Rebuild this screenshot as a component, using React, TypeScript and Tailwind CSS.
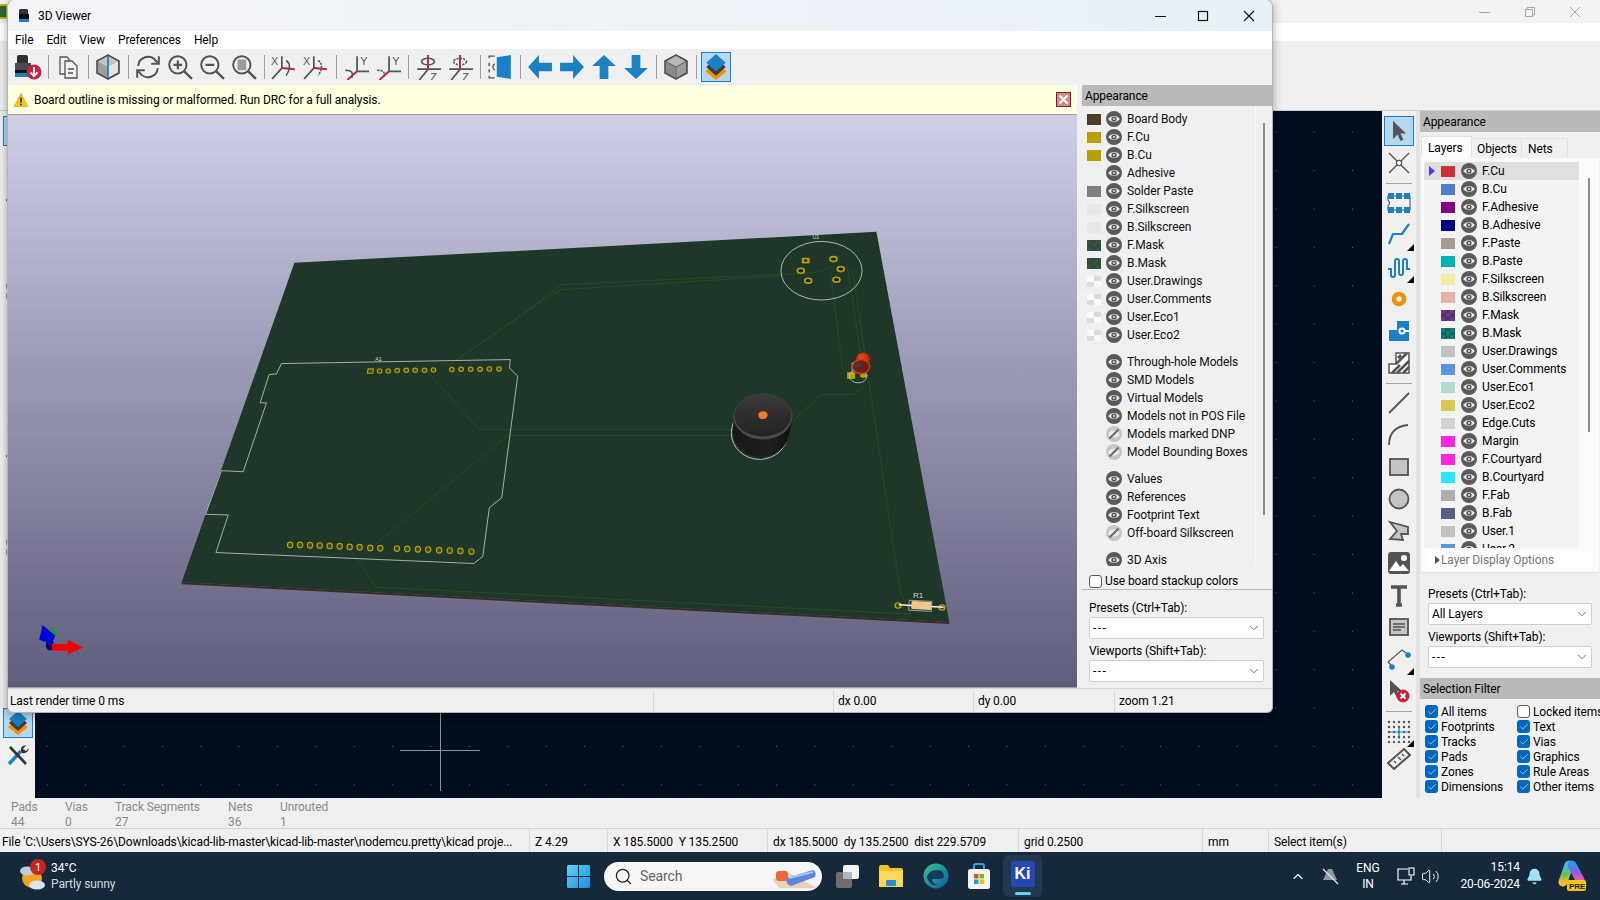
import React from "react";
import { Check, ChevronDown, ChevronUp, Search, Volume2, Bell } from "lucide-react";

const BLUE = "#1a81c4";
const GRAY = "#545454";

const Ic = ({ children, size = 24 }: { children: React.ReactNode; size?: number }) => (
  <svg width={size} height={size} viewBox="0 0 24 24" fill="none">
    {children}
  </svg>
);

const Eye = ({ off }: { off?: boolean }) =>
  off ? (
    <svg width="16" height="16" viewBox="0 0 16 16" className="shrink-0">
      <circle cx="8" cy="8" r="8" fill="#c6c6c6" />
      <ellipse cx="8" cy="8" rx="5.5" ry="3.6" fill="#ececec" />
      <path d="M3.5 12.5L12.5 3.5" stroke="#6a6a6a" strokeWidth="2" />
    </svg>
  ) : (
    <svg width="16" height="16" viewBox="0 0 16 16" className="shrink-0">
      <circle cx="8" cy="8" r="8" fill="#5a5a5a" />
      <path d="M2.2 8C5 4 11 4 13.8 8C11 12 5 12 2.2 8Z" fill="#e9e9e9" />
      <circle cx="8" cy="8" r="2.6" fill="#5a5a5a" />
      <circle cx="8" cy="8" r="1" fill="#e9e9e9" />
    </svg>
  );

/* ---------- 3D viewer toolbar icons ---------- */
const RenderIcon = () => (
  <svg width="28" height="26" viewBox="0 0 28 26">
    <path d="M3 3Q3 1 5 1H12Q14 1 14 3V9H3Z" fill="#303030" />
    <rect x="1" y="9" width="16" height="7" fill="#4a4a4a" />
    <rect x="1" y="16" width="16" height="3" fill="#111" />
    <rect x="1" y="19" width="16" height="4" fill={BLUE} />
    <circle cx="20" cy="18" r="7.5" fill="#c9203c" />
    <path d="M20 13V22M16.5 18.5L20 22L23.5 18.5" stroke="#fff" strokeWidth="2" fill="none" />
  </svg>
);
const CopyIcon = () => (
  <Ic>
    <path d="M4 2H11L13 4V19H4Z" stroke={GRAY} strokeWidth="1.3" fill="#f0f0f0" />
    <path d="M9 6H16L21 11V23H9Z" stroke={GRAY} strokeWidth="1.3" fill="#f0f0f0" />
    <path d="M12 14H18M12 18H17" stroke={GRAY} strokeWidth="1.3" />
  </Ic>
);
const CubeIcon = ({ blue }: { blue?: boolean }) => (
  <Ic size={26}>
    <path d="M12 1L22 6.5V17.5L12 23L2 17.5V6.5Z" fill={blue ? "#e4e4e4" : "#9a9a9a"} stroke={GRAY} strokeWidth="1.4" />
    <path d="M12 1L22 6.5L12 12L2 6.5Z" fill={blue ? "#c4c4c4" : "#b8b8b8"} />
    <path d="M2 6.5V17.5L12 23V12Z" fill={blue ? "#9c9c9c" : "#8a8a8a"} />
    {blue ? (
      <path d="M12 1V23" stroke={BLUE} strokeWidth="1.6" />
    ) : (
      <path d="M12 12V23M12 12L2 6.5M12 12L22 6.5" stroke="#6a6a6a" strokeWidth="1" />
    )}
    <path d="M12 1L22 6.5V17.5L12 23L2 17.5V6.5Z" fill="none" stroke={GRAY} strokeWidth="1.4" />
  </Ic>
);
const RefreshIcon = () => (
  <Ic size={26}>
    <path d="M3 11A9 9 0 0 1 19 6L21 8" stroke={GRAY} strokeWidth="1.8" />
    <path d="M22 2V9H15" stroke={GRAY} strokeWidth="1.8" />
    <path d="M21 13A9 9 0 0 1 5 18L3 16" stroke={GRAY} strokeWidth="1.8" />
    <path d="M2 22V15H9" stroke={GRAY} strokeWidth="1.8" />
  </Ic>
);
const ZoomIcon = ({ mode }: { mode: "in" | "out" | "fit" }) => (
  <Ic size={26}>
    <circle cx="10" cy="10" r="8" stroke={GRAY} strokeWidth="1.8" />
    <path d="M16 16L23 23" stroke={GRAY} strokeWidth="2.2" />
    {mode !== "fit" && <path d="M6 10H14" stroke={GRAY} strokeWidth="2" />}
    {mode === "in" && <path d="M10 6V14" stroke={GRAY} strokeWidth="2" />}
    {mode === "fit" && <rect x="6" y="5" width="8" height="10" rx="1" fill="#9a9a9a" />}
  </Ic>
);
const RotIcon = ({ axis, flip }: { axis: "X" | "Y" | "Z"; flip?: boolean }) => (
  <Ic size={26}>
    {axis === "X" && (
      <>
        <path d="M1 23L10 13V2" stroke={GRAY} strokeWidth="1.6" />
        <path d="M10 13L22 14" stroke="#c9203c" strokeWidth="1.8" />
        <path d="M14 6Q20 10 14 20" stroke={GRAY} strokeWidth="1.4" strokeDasharray={flip ? "2 1" : undefined} />
        <text x="0" y="10" fontSize="10" fill={GRAY} fontFamily="Liberation Sans">X</text>
      </>
    )}
    {axis === "Y" && (
      <>
        <path d="M13 2V16H24" stroke={GRAY} strokeWidth="1.6" />
        <path d="M13 16L4 24" stroke="#c9203c" strokeWidth="1.8" />
        <path d="M2 15Q11 15 8 22" stroke={GRAY} strokeWidth="1.4" strokeDasharray={flip ? "2 1" : undefined} />
        <text x="16" y="10" fontSize="10" fill={GRAY} fontFamily="Liberation Sans">Y</text>
      </>
    )}
    {axis === "Z" && (
      <>
        <path d="M2 14H24M12 14L4 24" stroke={GRAY} strokeWidth="1.6" />
        <path d="M12 1V14" stroke="#c9203c" strokeWidth="1.8" />
        <ellipse cx="12" cy="7" rx="6" ry="3" stroke={GRAY} strokeWidth="1.4" strokeDasharray={flip ? "2 1" : undefined} />
        <text x="14" y="25" fontSize="10" fill={GRAY} fontFamily="Liberation Sans">Z</text>
      </>
    )}
  </Ic>
);
const FlipIcon = () => (
  <Ic size={26}>
    <path d="M7 2H2V4M2 8V11M2 14V17M2 20V22H7" stroke={GRAY} strokeWidth="1.3" fill="none" />
    <path d="M9 3L22 1V23L9 21Z" fill={BLUE} />
    <path d="M7 9Q4 12 7 15" stroke={GRAY} strokeWidth="1.2" />
  </Ic>
);
const Arrow = ({ d }: { d: "l" | "r" | "u" | "d" }) => {
  const rot = { l: "rotate(180 12 12)", r: "", u: "rotate(-90 12 12)", d: "rotate(90 12 12)" }[d];
  return (
    <Ic size={26}>
      <path transform={rot} d="M1 8H13V1L23 12L13 23V16H1Z" fill={BLUE} />
    </Ic>
  );
};
const LayersIcon = () => (
  <Ic size={26}>
    <path d="M12 8L22 16L12 24L2 16Z" fill="#f29100" />
    <path d="M12 4L21 12L12 20L3 12Z" fill="#3d3d3d" />
    <path d="M12 0L21 8L12 16L3 8Z" fill={BLUE} />
  </Ic>
);

/* ---------- pcb editor drawing tools ---------- */
const tool = {
  select: <path d="M6 2V20L10.5 15.5L13.5 22L16.5 20.8L13.5 14.5H19Z" fill={GRAY} />,
  route: (
    <>
      <path d="M2 2L10 10M22 2L14 10M2 22L10 14M22 22L14 14" stroke={GRAY} strokeWidth="1.4" />
      <circle cx="12" cy="12" r="2.6" stroke={GRAY} strokeWidth="1.2" fill="#fff" />
    </>
  ),
  footprint: (
    <>
      <path d="M1 5H23V19H1V15Q4 12 1 9Z" stroke={GRAY} strokeWidth="1.1" />
      {[1, 9, 17].map((x) => (
        <React.Fragment key={x}>
          <rect x={x} y="2" width="6" height="6" fill={BLUE} />
          <rect x={x} y="16" width="6" height="6" fill={BLUE} />
        </React.Fragment>
      ))}
    </>
  ),
  track: <path d="M2 21L6 11H15L22 1" stroke={BLUE} strokeWidth="2.2" />,
  tune: <path d="M1 14H4V20Q4 22 6 22T8 20V6Q8 4 10 4T12 6V18Q12 20 14 20T16 18V6Q16 4 18 4T20 6V14H23" stroke={BLUE} strokeWidth="2" />,
  via: <circle cx="12" cy="12" r="5" stroke="#f29100" strokeWidth="4.6" />,
  zone: (
    <>
      <path d="M10 2H22V22H2V11H10Z" fill={BLUE} />
      <path d="M22 12H15" stroke="#fff" strokeWidth="2" />
      <circle cx="15" cy="12" r="2.6" fill={BLUE} stroke="#fff" strokeWidth="2" />
    </>
  ),
  hatch: (
    <>
      <path d="M2 22V13H9V2H22V22Z" fill="#fff" stroke={GRAY} strokeWidth="1.5" />
      <path d="M5 22L13 14M10 22L22 10M16 22L22 16M9 13L20 2M14 4L11 7" stroke={GRAY} strokeWidth="2.6" />
    </>
  ),
  line: <path d="M2 22L22 2" stroke={GRAY} strokeWidth="1.8" />,
  arc: <path d="M2 22Q2 4 21 2" stroke={GRAY} strokeWidth="1.8" />,
  rect: <rect x="3" y="4" width="18" height="16" fill="#c4c4c4" stroke={GRAY} strokeWidth="1.8" />,
  circle: <circle cx="12" cy="12" r="9.5" fill="#c4c4c4" stroke={GRAY} strokeWidth="1.8" />,
  poly: <path d="M3 3L21 8V15L14 15L16 21L3 20L10 12Z" fill="#c4c4c4" stroke={GRAY} strokeWidth="1.8" />,
  image: (
    <>
      <rect x="1" y="1" width="22" height="22" rx="3" fill={GRAY} />
      <circle cx="17" cy="7" r="3" fill="#fff" />
      <path d="M2 20L9 10L13 16L16 13L22 20Z" fill="#fff" />
    </>
  ),
  text: <path d="M4 4H20M12 4V22M9 22H15" stroke={GRAY} strokeWidth="3.6" />,
  textbox: (
    <>
      <rect x="3" y="4" width="18" height="16" fill="#c4c4c4" stroke={GRAY} strokeWidth="1.8" />
      <path d="M6 9H18M6 12H18M6 15H14" stroke={GRAY} strokeWidth="1.3" />
    </>
  ),
  dim: (
    <>
      <path d="M4 18L1 15L15 3L19 6" stroke={GRAY} strokeWidth="1.2" />
      <circle cx="5" cy="20" r="2.8" fill={BLUE} />
      <circle cx="21" cy="8" r="2.8" fill={BLUE} />
    </>
  ),
  del: (
    <>
      <path d="M3 1V17L7 13L10 19L13 18L10 12H15Z" fill={GRAY} />
      <circle cx="16" cy="17" r="6.5" fill="#c9203c" />
      <path d="M13.5 14.5L18.5 19.5M18.5 14.5L13.5 19.5" stroke="#fff" strokeWidth="1.8" />
    </>
  ),
  grid: (
    <>
      {[2, 7, 12, 17, 22].map((x) =>
        [3, 8, 13, 18, 23].map((y) => <circle key={`${x}-${y}`} cx={x} cy={y} r="1.2" fill={GRAY} />)
      )}
      <path d="M2 13H22M12 8V20" stroke={BLUE} strokeWidth="1.2" />
    </>
  ),
  ruler: (
    <>
      <path d="M1 17L17 3L23 9L7 23Z" fill="#eee" stroke={GRAY} strokeWidth="2" />
      <path d="M7 15L9 17M11 11L14 14M15 8L17 10" stroke={GRAY} strokeWidth="1.4" />
    </>
  ),
  layers: (
    <>
      <path d="M12 8L22 16L12 24L2 16Z" fill="#f29100" />
      <path d="M12 4L21 12L12 20L3 12Z" fill="#3d3d3d" />
      <path d="M12 0L21 8L12 16L3 8Z" fill={BLUE} />
    </>
  ),
  wrench: (
    <>
      <path d="M3 21L15 8" stroke={BLUE} strokeWidth="3.4" />
      <path d="M15 8Q14 3 20 2L17 6L20 8L23 5Q22 11 16 10" fill="#333" />
      <path d="M4 4L20 21" stroke="#333" strokeWidth="2.6" />
    </>
  ),
};

const ToolBtn = ({ icon, corner, active }: { icon: React.ReactNode; corner?: boolean; active?: boolean }) => (
  <div
    className={
      active
        ? "relative w-[30px] h-[30px] mx-auto my-px flex items-center justify-center bg-[#b6d7f2] border border-[#1a81c4]"
        : "relative w-[30px] h-[32px] mx-auto flex items-center justify-center"
    }
  >
    <Ic>{icon}</Ic>
    {corner && <div className="absolute right-0 bottom-0 w-0 h-0 border-l-[7px] border-l-transparent border-b-[7px] border-b-black" />}
  </div>
);
const VSep = () => <div className="h-2 flex items-center px-1"><div className="w-full h-px bg-[#a8a8a8]" /></div>;

/* ---------- lists ---------- */
const swatchDark = "bg-[repeating-conic-gradient(#2e4a38_0_25%,#37533f_0_50%)] bg-[size:9px_7px]";
const swatchChecker = "bg-[repeating-conic-gradient(#dcdcdc_0_25%,#fafafa_0_50%)] bg-[size:14px_11px]";

const viewerRows: { n: string; c?: string; gap?: boolean; off?: boolean }[] = [
  { n: "Board Body", c: "bg-[#4a3f28]" },
  { n: "F.Cu", c: "bg-[#b8a000]" },
  { n: "B.Cu", c: "bg-[#b8a000]" },
  { n: "Adhesive" },
  { n: "Solder Paste", c: "bg-[#808080]" },
  { n: "F.Silkscreen", c: "bg-[#e8e8e8]" },
  { n: "B.Silkscreen", c: "bg-[#e8e8e8]" },
  { n: "F.Mask", c: swatchDark },
  { n: "B.Mask", c: swatchDark },
  { n: "User.Drawings", c: swatchChecker },
  { n: "User.Comments", c: swatchChecker },
  { n: "User.Eco1", c: swatchChecker },
  { n: "User.Eco2", c: swatchChecker },
  { n: "Through-hole Models", gap: true },
  { n: "SMD Models" },
  { n: "Virtual Models" },
  { n: "Models not in POS File" },
  { n: "Models marked DNP", off: true },
  { n: "Model Bounding Boxes", off: true },
  { n: "Values", gap: true },
  { n: "References" },
  { n: "Footprint Text" },
  { n: "Off-board Silkscreen", off: true },
  { n: "3D Axis", gap: true },
];

const layerRows: { n: string; c: string }[] = [
  { n: "F.Cu", c: "bg-[#c83434]" },
  { n: "B.Cu", c: "bg-[#4d7fc4]" },
  { n: "F.Adhesive", c: "bg-[#840084]" },
  { n: "B.Adhesive", c: "bg-[#000084]" },
  { n: "F.Paste", c: "bg-[#a89a90]" },
  { n: "B.Paste", c: "bg-[#00b2ae]" },
  { n: "F.Silkscreen", c: "bg-[#f2eda1]" },
  { n: "B.Silkscreen", c: "bg-[#e8b2a7]" },
  { n: "F.Mask", c: "bg-[repeating-conic-gradient(#5a2d70_0_25%,#6b3a80_0_50%)] bg-[size:9px_7px]" },
  { n: "B.Mask", c: "bg-[repeating-conic-gradient(#006a60_0_25%,#1a7a70_0_50%)] bg-[size:9px_7px]" },
  { n: "User.Drawings", c: "bg-[#c2c2c2]" },
  { n: "User.Comments", c: "bg-[#5a93de]" },
  { n: "User.Eco1", c: "bg-[#b3dbd2]" },
  { n: "User.Eco2", c: "bg-[#d9c852]" },
  { n: "Edge.Cuts", c: "bg-[#d0d2cd]" },
  { n: "Margin", c: "bg-[#ff26e2]" },
  { n: "F.Courtyard", c: "bg-[#ff26e2]" },
  { n: "B.Courtyard", c: "bg-[#26e9ff]" },
  { n: "F.Fab", c: "bg-[#afafaf]" },
  { n: "B.Fab", c: "bg-[#585d84]" },
  { n: "User.1", c: "bg-[#c2c2c2]" },
  { n: "User.2", c: "bg-[#5a93de]" },
];

const filters = [
  ["All items", "Locked items"],
  ["Footprints", "Text"],
  ["Tracks", "Vias"],
  ["Pads", "Graphics"],
  ["Zones", "Rule Areas"],
  ["Dimensions", "Other items"],
];

const CheckBox = ({ on }: { on: boolean }) =>
  on ? (
    <span className="w-[13px] h-[13px] rounded-[3px] bg-[#0067c0] flex items-center justify-center shrink-0">
      <Check size={10} color="#fff" strokeWidth={1.5} />
    </span>
  ) : (
    <span className="w-[13px] h-[13px] rounded-[3px] bg-white border border-[#5c5c5c] shrink-0" />
  );

const Select = ({ value }: { value: string }) => (
  <div className="h-[22px] bg-white border border-[#cfcfcf] rounded-[2px] flex items-center justify-between pl-[3px] pr-[2px] text-[12px]">
    <span className={value === "---" ? "tracking-[1.4px]" : ""}>{value}</span>
    <ChevronDown size={14} strokeWidth={1.2} color="#333" />
  </div>
);

const Divider = () => <div className="w-2 flex items-center justify-center h-8"><div className="w-px h-6 bg-[#a0a0a0]" /></div>;
const TB = ({ children, active }: { children: React.ReactNode; active?: boolean }) => (
  <div className={active ? "w-[30px] h-[30px] mx-px flex items-center justify-center bg-[#b6d7f2] border border-[#1a81c4]" : "w-8 h-8 flex items-center justify-center"}>
    {children}
  </div>
);

/* ---------- the 3D scene ---------- */
const topPads = [[598, 94], [625, 94], [651, 94], [678, 93], [705, 92], [732, 92], [760, 92], [787, 91], [842, 90], [870, 89], [899, 89], [927, 89], [955, 88], [984, 88]];
const botPads = [[356, 617], [386, 617], [416, 618], [445, 619], [475, 620], [505, 621], [535, 623], [565, 624], [597, 626], [627, 627], [677, 628], [708, 629], [740, 630], [771, 631], [804, 633], [836, 634], [868, 635], [901, 637]];

const Scene = () => (
  <svg viewBox="7 115 1069 573" className="absolute inset-0 w-full h-full">
    <defs>
      <linearGradient id="top" x1="0" y1="0" x2="0" y2="1">
        <stop offset="0" stopColor="#3a3a3a" />
        <stop offset="1" stopColor="#232323" />
      </linearGradient>
      <linearGradient id="side" x1="0" y1="0" x2="1" y2="0">
        <stop offset="0" stopColor="#161616" />
        <stop offset="0.6" stopColor="#202020" />
        <stop offset="1" stopColor="#0e0e0e" />
      </linearGradient>
      <radialGradient id="led" cx="0.4" cy="0.35" r="0.7">
        <stop offset="0" stopColor="#e8501c" />
        <stop offset="1" stopColor="#a01405" />
      </radialGradient>
    </defs>
    <polygon points="180,583 949,623 949,625 180,585" fill="#3a2c24" />
    <polygon points="293,263 876,232 949,623 180,583" fill="#1f3728" />

    {/* tracks */}
    <g stroke="#2d4729" strokeWidth="1" fill="none">
      <path d="M427 373L478 430H733" />
      <path d="M507 436L732 436" />
      <path d="M507 436L372 547" />
      <path d="M351 553L375 588L910 615L900 593L883 480L852 270" />
      <path d="M447 366L520 316L560 285L815 273L832 267" />
      <path d="M447 366L540 302L560 290L783 276" />
      <path d="M830 272L842 368L848 373" />
      <path d="M837 267L847 267L860 353" />
      <path d="M792 422L821 395L853 395L863 387" />
    </g>

    {/* A1 courtyard + pads */}
    <g transform="translate(170 340) scale(0.3333)">
      <path
        d="M330 72L1018 60L1015 85L1040 110L992 475L955 505L935 652L908 673L133 640L170 527L102 525L150 394L215 397L285 190L266 190L293 105L315 103Z"
        fill="none"
        stroke="#b9c2bb"
        strokeWidth="2.6"
      />
      <text x="612" y="63" fontSize="16" fill="#d6dcd6" fontFamily="Liberation Sans">A1</text>
      <rect x="590" y="88" width="16" height="13" fill="#3c4a2c" stroke="#b8a000" strokeWidth="3.5" transform="skewX(-10) translate(16 0)" />
      {topPads.slice(1).map(([x, y]) => (
        <ellipse key={x} cx={x} cy={y} rx="7" ry="6.5" fill="#3c4a2c" stroke="#b8a000" strokeWidth="3.5" />
      ))}
      {botPads.map(([x, y]) => (
        <ellipse key={x} cx={x} cy={y} rx="8" ry="8.5" fill="#3c4a2c" stroke="#b8a000" strokeWidth="3.5" />
      ))}
    </g>

    {/* U1, LED, buzzer */}
    <g transform="translate(660 220) scale(0.3333)">
      <ellipse cx="483" cy="153" rx="122" ry="88" fill="none" stroke="#c3c9c4" strokeWidth="2.6" />
      <text x="456" y="57" fontSize="16" fill="#d6dcd6" fontFamily="Liberation Sans">U1</text>
      <rect x="424" y="114" width="23" height="17" fill="#b8a000" />
      <rect x="431" y="119" width="9" height="7" fill="#1a2014" />
      {[[519, 118], [541, 148], [528, 180], [443, 183], [421, 153]].map(([x, y]) => (
        <ellipse key={x} cx={x} cy={y} rx="10.5" ry="7.5" fill="#1a2014" stroke="#b8a000" strokeWidth="5" />
      ))}

      <rect x="560" y="458" width="24" height="20" fill="#b8a000" />
      <ellipse cx="610" cy="468" rx="11" ry="7" fill="#b8a000" />
      <ellipse cx="593" cy="470" rx="26" ry="20" fill="none" stroke="#c3c9c4" strokeWidth="2.4" />
      <path d="M575 430V466M575 430H590" stroke="#c3c9c4" strokeWidth="2.4" />
      <circle cx="608" cy="420" r="21" fill="url(#led)" />
      <ellipse cx="602" cy="441" rx="26" ry="21" fill="#6b1d16" stroke="#e6381c" strokeWidth="4" />
      <ellipse cx="593" cy="438" rx="11" ry="9" fill="#4b3436" />

      <ellipse cx="297" cy="640" rx="85" ry="80" fill="none" stroke="#cfd4cf" strokeWidth="2.6" />
      <path d="M218 600V650Q225 700 300 718Q375 700 384 650L396 600Z" fill="url(#side)" />
      <ellipse cx="307" cy="591" rx="89" ry="69" fill="#4a4a4a" />
      <ellipse cx="307" cy="587" rx="86" ry="64" fill="url(#top)" />
      <ellipse cx="307" cy="587" rx="14" ry="12" fill="#ee7c30" />
    </g>

    {/* R1 */}
    <g transform="translate(800 560) scale(0.3333)">
      <text x="338" y="118" fontSize="24" fill="#d6dcd6" fontFamily="Liberation Sans">R1</text>
      <ellipse cx="293" cy="139" rx="9" ry="8" fill="#3c4a2c" stroke="#b8a000" strokeWidth="4" />
      <ellipse cx="425" cy="145" rx="9" ry="8" fill="#3c4a2c" stroke="#b8a000" strokeWidth="4" />
      <path d="M296 137L430 144" stroke="#f2f2f2" strokeWidth="4.5" />
      <rect x="326" y="125" width="68" height="30" transform="rotate(3 360 140)" fill="none" stroke="#c3c9c4" strokeWidth="2.2" />
      <rect x="333" y="127" width="60" height="24" rx="3" transform="rotate(3 360 140)" fill="#f4c48e" />
    </g>

    {/* axis */}
    <g transform="translate(0 590) scale(0.3333)">
      <path d="M145 112L168 135L150 150Z" fill="#10a020" />
      <ellipse cx="144" cy="168" rx="12" ry="16" fill="#000a70" />
      <path d="M122 108L160 140L150 165L112 152Z" fill="#0000d8" />
      <path d="M150 165H198V153L244 175L198 196V185H150Z" fill="#f00000" />
    </g>
  </svg>
);

/* ---------- the 3D viewer window ---------- */
const ViewerWindow = () => (
  <div className="absolute left-[7px] top-0 w-[1264px] h-[712px] flex flex-col rounded-t-lg rounded-b-md overflow-hidden border border-[#b4b4b4] border-t-[#c8c8c8] bg-[#f0f0f0] shadow-[0_2px_10px_rgba(0,0,0,0.35)] z-10 -mt-px box-content">
    <div className="h-[31px] shrink-0 bg-gradient-to-r from-[#f3f4f7] via-[#eef3f8] to-[#e9f1f6] flex items-center text-[12px] text-black">
      <svg width="10" height="15" viewBox="0 0 10 15" className="ml-[11px] mr-[9px]">
        <path d="M1 1H8L9 2V6H0V2Z" fill="#333" />
        <rect x="0" y="6" width="10" height="5" fill="#111" />
        <rect x="0" y="11" width="10" height="3" fill={BLUE} />
      </svg>
      3D Viewer
      <svg width="110" height="14" viewBox="0 0 110 14" className="ml-auto mr-[10px]">
        <path d="M3 7.5H14" stroke="#111" strokeWidth="1" />
        <rect x="46.5" y="2.5" width="9" height="9" fill="none" stroke="#111" strokeWidth="1.2" />
        <path d="M92 2L102 12M102 2L92 12" stroke="#111" strokeWidth="1.1" />
      </svg>
    </div>
    <div className="h-[18px] shrink-0 bg-white flex items-center gap-[13px] pl-[7px] text-[12px] text-black">
      <span>File</span>
      <span>Edit</span>
      <span>View</span>
      <span>Preferences</span>
      <span>Help</span>
    </div>
    <div className="h-9 shrink-0 flex items-center pl-1 bg-[#f0f0f0]">
      <TB><RenderIcon /></TB>
      <Divider />
      <TB><CopyIcon /></TB>
      <Divider />
      <TB><CubeIcon blue /></TB>
      <Divider />
      <TB><RefreshIcon /></TB>
      <TB><ZoomIcon mode="in" /></TB>
      <TB><ZoomIcon mode="out" /></TB>
      <TB><ZoomIcon mode="fit" /></TB>
      <Divider />
      <TB><RotIcon axis="X" /></TB>
      <TB><RotIcon axis="X" flip /></TB>
      <Divider />
      <TB><RotIcon axis="Y" /></TB>
      <TB><RotIcon axis="Y" flip /></TB>
      <Divider />
      <TB><RotIcon axis="Z" /></TB>
      <TB><RotIcon axis="Z" flip /></TB>
      <Divider />
      <TB><FlipIcon /></TB>
      <Divider />
      <TB><Arrow d="l" /></TB>
      <TB><Arrow d="r" /></TB>
      <TB><Arrow d="u" /></TB>
      <TB><Arrow d="d" /></TB>
      <Divider />
      <TB><CubeIcon /></TB>
      <Divider />
      <TB active><LayersIcon /></TB>
    </div>

    <div className="flex h-[603px] shrink-0">
      <div className="w-[1069px] flex flex-col shrink-0">
        <div className="h-[30px] shrink-0 bg-[#ffffe1] border-b border-[#a0a0a0] flex items-center pl-[6px] text-[12px] text-black">
          <svg width="14" height="14" viewBox="0 0 14 14" className="mr-[6px]">
            <path d="M7 0.5L13.8 13.5H0.2Z" fill="#f5c518" stroke="#b08a00" strokeWidth="0.5" />
            <path d="M7 4.5V9.5" stroke="#222" strokeWidth="1.6" />
            <circle cx="7" cy="11.4" r="0.9" fill="#222" />
          </svg>
          Board outline is missing or malformed. Run DRC for a full analysis.
          <div className="ml-auto mr-[6px] w-[15px] h-[15px] bg-[#d98a84] border border-[#6a2a26] flex items-center justify-center">
            <svg width="11" height="11" viewBox="0 0 11 11">
              <path d="M1.5 1.5L9.5 9.5M9.5 1.5L1.5 9.5" stroke="#fff" strokeWidth="2" />
            </svg>
          </div>
        </div>
        <div className="relative flex-1 bg-gradient-to-b from-[#cfcfe8] to-[#5f5d7c] border-b border-[#a0a0a0]">
          <Scene />
        </div>
      </div>
      <div className="flex-1 pl-[5px] flex flex-col">
        <div className="h-[21px] shrink-0 bg-[#bababa] flex items-center pl-[3px] text-[12px] text-black">Appearance</div>
        <div className="h-[460px] shrink-0 relative overflow-hidden pt-[4px] text-[12px] text-[#111]">
          {viewerRows.map((r) => (
            <div key={r.n} className={r.gap ? "h-[18px] mt-[9px] flex items-center" : "h-[18px] flex items-center"}>
              <div className={`ml-[5px] w-[14px] h-[11px] shrink-0 ${r.c ?? ""}`} />
              <div className="ml-[5px]"><Eye off={r.off} /></div>
              <span className="ml-[5px]">{r.n}</span>
            </div>
          ))}
          <div className="absolute right-[16px] top-0 bottom-0 w-px bg-[#fafafa]" />
          <div className="absolute right-[7px] top-[17px] h-[392px] w-[2px] bg-[#8f8f8f]" />
        </div>
        <div className="h-[24px] shrink-0 flex items-center pl-[7px] pt-[7px] gap-[3px] text-[12px] text-black border-b border-[#bcbcbc]">
          <CheckBox on={false} />
          Use board stackup colors
        </div>
        <div className="px-[7px] pr-[8px] text-[12px] text-black">
          <div className="mt-[9px] h-[17px] flex items-center">Presets (Ctrl+Tab):</div>
          <div className="mt-[1px]"><Select value="---" /></div>
          <div className="mt-[3px] h-[17px] flex items-center">Viewports (Shift+Tab):</div>
          <div className="mt-[1px]"><Select value="---" /></div>
        </div>
      </div>
    </div>

    <div className="flex-1 border-t border-[#d8d8d8] flex items-center pt-px text-[12px] text-black relative">
      <div className="w-[645px] pl-[2px] shrink-0">Last render time 0 ms</div>
      <div className="w-[180px] h-full border-l border-[#d8d8d8] shrink-0" />
      <div className="w-[140px] h-full border-l border-[#d8d8d8] pl-[4px] shrink-0 flex items-center">dx 0.00</div>
      <div className="w-[141px] h-full border-l border-[#d8d8d8] pl-[4px] shrink-0 flex items-center">dy 0.00</div>
      <div className="h-full border-l border-[#d8d8d8] pl-[4px] flex items-center">zoom 1.21</div>
    </div>
  </div>
);

/* ---------- taskbar bits ---------- */
const Taskbar = () => (
  <div className="h-12 shrink-0 bg-[#15293b] flex items-center text-white text-[12px]">
    <div className="w-[567px] shrink-0 flex items-center pl-[20px]">
      <div className="relative w-[26px] h-[30px] shrink-0">
        <svg width="26" height="30" viewBox="0 0 26 30">
          <circle cx="12" cy="17" r="10" fill="#f4a21e" />
          <ellipse cx="7" cy="10" rx="7" ry="4.5" fill="#b8cfe4" />
          <ellipse cx="17" cy="24" rx="8" ry="4.5" fill="#d9e6f2" />
        </svg>
        <span className="absolute left-[10px] top-[-2px] w-[16px] h-[16px] rounded-full bg-[#c4261c] flex items-center justify-center text-[11px] leading-none">1</span>
      </div>
      <div className="ml-[5px] leading-[16px]">
        <div>34°C</div>
        <div className="text-[#d2d8de]">Partly sunny</div>
      </div>
    </div>
    <svg width="23" height="23" viewBox="0 0 23 23" className="shrink-0">
      <defs>
        <linearGradient id="winlogo" x1="0" y1="0" x2="1" y2="1">
          <stop offset="0" stopColor="#62d2f7" />
          <stop offset="1" stopColor="#1c8fdc" />
        </linearGradient>
      </defs>
      <path d="M0 1.5Q0 0 1.5 0H11V11H0ZM12 0H21.5Q23 0 23 1.5V11H12ZM0 12H11V23H1.5Q0 23 0 21.5ZM12 12H23V21.5Q23 23 21.5 23H12Z" fill="url(#winlogo)" />
    </svg>
    <div className="ml-[14px] w-[218px] h-[29px] rounded-full bg-[#f6f6f6] flex items-center pl-[10px] relative shrink-0">
      <Search size={19} color="#222" strokeWidth={1.6} />
      <span className="ml-[7px] text-[14px] text-[#666]">Search</span>
      <svg width="48" height="26" viewBox="0 0 48 26" className="absolute right-[3px] top-[2px]">
        <path d="M2 16L12 6L20 10L46 24H8Z" fill="#e8d2b6" />
        <rect x="5" y="7" width="12" height="10" rx="3" fill="#e8683a" />
        <path d="M16 14L42 6Q46 8 44 13L20 22Q14 20 16 14Z" fill="#5a86dc" />
        <path d="M18 14L42 8" stroke="#a8c6f4" strokeWidth="2" />
      </svg>
    </div>
    <svg width="25" height="24" viewBox="0 0 25 24" className="ml-[13px] shrink-0">
      <rect x="1" y="8" width="16" height="16" rx="2" fill="#6e6e6e" />
      <rect x="8" y="1" width="16" height="14" rx="2" fill="#f4f4f4" />
      <rect x="8" y="8" width="9" height="7" fill="#b6b6b6" />
    </svg>
    <svg width="26" height="26" viewBox="0 0 26 26" className="ml-[18px] shrink-0">
      <path d="M1 4Q1 2 3 2H10L12 5H23Q25 5 25 7V24H1Z" fill="#f2c229" />
      <path d="M1 8H25V24H1Z" fill="#ffd75a" />
      <rect x="8" y="17" width="10" height="6" rx="1" fill="#2b8ad8" />
    </svg>
    <svg width="26" height="26" viewBox="0 0 26 26" className="ml-[19px] shrink-0">
      <defs>
        <linearGradient id="edgeg" x1="0" y1="0" x2="1" y2="1">
          <stop offset="0" stopColor="#36c98e" />
          <stop offset="1" stopColor="#0c59a4" />
        </linearGradient>
      </defs>
      <circle cx="13" cy="13" r="12.5" fill="url(#edgeg)" />
      <path d="M4 15Q5 7 14 7Q21 7 21 13Q21 16 17 16H9Q9 21 15 22Q8 24 4 15Z" fill="#143a5e" />
    </svg>
    <svg width="24" height="26" viewBox="0 0 24 26" className="ml-[18px] shrink-0">
      <path d="M7 6V3Q7 1 9 1H15Q17 1 17 3V6" fill="none" stroke="#2aa6e8" strokeWidth="2" />
      <rect x="1" y="6" width="22" height="20" rx="2.5" fill="#f4f4f4" />
      <rect x="7" y="11" width="4.5" height="4.5" fill="#e8532c" />
      <rect x="12.5" y="11" width="4.5" height="4.5" fill="#7dba1f" />
      <rect x="7" y="16.5" width="4.5" height="4.5" fill="#1d9ae0" />
      <rect x="12.5" y="16.5" width="4.5" height="4.5" fill="#fab90f" />
    </svg>
    <div className="relative ml-[12px] w-[39px] h-[42px] rounded-[5px] bg-[#22384c] flex items-start justify-center pt-[6px] shrink-0">
      <div className="w-[24px] h-[26px] rounded-[3px] bg-[#2448b8] flex items-center justify-center text-[16px] font-bold font-['Liberation_Sans',sans-serif]">Ki</div>
      <div className="absolute bottom-[2px] w-[16px] h-[3px] rounded-full bg-[#6ccff6]" />
    </div>

    <div className="ml-[248px] w-[16px] flex justify-center shrink-0"><ChevronUp size={17} color="#fff" strokeWidth={1.6} /></div>
    <svg width="20" height="20" viewBox="0 0 20 20" className="ml-[14px] shrink-0">
      <path d="M3 14L8 3H12L17 14Z" fill="#8d98a2" />
      <path d="M3 3L18 18" stroke="#e8e8e8" strokeWidth="1.2" />
    </svg>
    <div className="ml-[8px] w-[40px] text-center leading-[16px] shrink-0">
      <div>ENG</div>
      <div>IN</div>
    </div>
    <svg width="19" height="19" viewBox="0 0 19 19" className="ml-[9px] shrink-0">
      <path d="M11 2H1V13H14V9" fill="none" stroke="#fff" strokeWidth="1.2" />
      <rect x="12" y="1" width="5" height="7" fill="none" stroke="#fff" strokeWidth="1.1" />
      <path d="M7 13V17M4 17H11" stroke="#fff" strokeWidth="1.2" />
    </svg>
    <div className="ml-[5px] w-[20px] shrink-0"><Volume2 size={19} color="#fff" strokeWidth={1.2} /></div>
    <div className="ml-[3px] w-[76px] text-right leading-[17px] shrink-0">
      <div>15:14</div>
      <div>20-06-2024</div>
    </div>
    <div className="ml-[6px] w-[18px] shrink-0"><Bell size={17} color="#a6e0ff" fill="#a6e0ff" /></div>
    <svg width="30" height="32" viewBox="0 0 30 32" className="ml-[13px] shrink-0">
      <defs>
        <linearGradient id="copl" x1="0" y1="0" x2="0" y2="1">
          <stop offset="0" stopColor="#3ac0e8" />
          <stop offset="0.55" stopColor="#62c05a" />
          <stop offset="1" stopColor="#f0c030" />
        </linearGradient>
        <linearGradient id="copr" x1="0" y1="0" x2="0" y2="1">
          <stop offset="0" stopColor="#3a8cf0" />
          <stop offset="0.5" stopColor="#8a5cea" />
          <stop offset="1" stopColor="#ee5ab0" />
        </linearGradient>
      </defs>
      <path d="M12 5L6 22" stroke="url(#copl)" strokeWidth="9" strokeLinecap="round" />
      <path d="M15 5L23 20" stroke="url(#copr)" strokeWidth="9" strokeLinecap="round" />
      <rect x="10" y="20" width="19" height="11" rx="2" fill="#f6c41c" />
      <text x="12" y="29" fontSize="8" fontWeight="700" fill="#222" fontFamily="Liberation Sans">PRE</text>
    </svg>
  </div>
);

const leftTools: React.ReactNode[] = [tool.grid, tool.ruler, tool.route, tool.line, tool.footprint, tool.text, tool.via, tool.arc];

export default function App() {
  return (
    <div className="relative w-[1600px] h-[900px] overflow-hidden flex flex-col bg-[#f0f0f0] font-['Roboto',sans-serif] text-[12px] tracking-[-0.1px] text-black">
      {/* pcb editor behind the viewer */}
      <div className="h-[23px] shrink-0 bg-[#f3f3f3] flex items-center">
        <div className="ml-[-10px] w-[18px] h-[15px] bg-[#2c6a2c] border-2 border-[#c8b418] rounded-[2px]" />
        <svg width="110" height="12" viewBox="0 0 110 12" className="ml-auto mr-[11px]">
          <path d="M0 6.5H11" stroke="#a8a8a8" />
          <rect x="46.5" y="3.5" width="7" height="7" fill="none" stroke="#a8a8a8" />
          <path d="M48 3V1.5H55.5V9H54" fill="none" stroke="#a8a8a8" />
          <path d="M91 1L101 11M101 1L91 11" stroke="#a8a8a8" />
        </svg>
      </div>
      <div className="h-[18px] shrink-0 bg-white" />
      <div className="h-[70px] shrink-0 bg-[#f0f0f0] border-b border-[#cfcfcf]" />

      <div className="flex h-[687px] shrink-0">
        <div className="w-[35px] shrink-0 flex flex-col pt-1 overflow-hidden">
          <ToolBtn icon={tool.grid} active />
          {Array.from({ length: 17 }).map((_, i) => (
            <ToolBtn key={i} icon={leftTools[i % leftTools.length]} />
          ))}
          <div className="mt-[16px]"><ToolBtn icon={tool.layers} active /></div>
          <ToolBtn icon={tool.wrench} />
        </div>
        <div className="relative flex-1 bg-[#000d1e] bg-[radial-gradient(circle,#55626f_0.7px,transparent_1px)] bg-[size:38.4px_38.4px] bg-[position:-7px_2px]">
          <div className="absolute left-[405px] top-[580px] w-px h-[100px] bg-[#8a939c]" />
          <div className="absolute left-[365px] top-[639px] w-[80px] h-px bg-[#8a939c]" />
        </div>
        <div className="w-[34px] shrink-0 bg-[#f0f0f0] flex flex-col pt-1">
          <ToolBtn icon={tool.select} active />
          <ToolBtn icon={tool.route} />
          <VSep />
          <ToolBtn icon={tool.footprint} />
          <ToolBtn icon={tool.track} corner />
          <ToolBtn icon={tool.tune} corner />
          <ToolBtn icon={tool.via} />
          <ToolBtn icon={tool.zone} />
          <ToolBtn icon={tool.hatch} />
          <VSep />
          <ToolBtn icon={tool.line} />
          <ToolBtn icon={tool.arc} />
          <ToolBtn icon={tool.rect} />
          <ToolBtn icon={tool.circle} />
          <ToolBtn icon={tool.poly} />
          <ToolBtn icon={tool.image} />
          <ToolBtn icon={tool.text} />
          <ToolBtn icon={tool.textbox} />
          <ToolBtn icon={tool.dim} corner />
          <ToolBtn icon={tool.del} />
          <VSep />
          <ToolBtn icon={tool.grid} corner />
          <div className="-mt-[5px]"><ToolBtn icon={tool.ruler} /></div>
        </div>
        <div className="w-1 shrink-0 bg-[#e3e3e3]" />

        <div className="w-[180px] shrink-0 flex flex-col bg-[#f0f0f0] text-[12px] text-black">
          <div className="h-[21px] shrink-0 bg-[#bababa] flex items-center pl-[3px]">Appearance</div>
          <div className="h-[26px] shrink-0 flex items-end pl-px">
            <div className="w-[51px] h-[22px] bg-[#fbfbfb] border border-b-0 border-[#e2e2e2] flex items-start pt-[2px] pl-[6px]">Layers</div>
            <div className="w-[50px] h-[20px] border-r border-t border-[#e2e2e2] flex items-center pl-[5px]">Objects</div>
            <div className="w-[46px] h-[20px] border-r border-t border-[#e2e2e2] flex items-center pl-[6px]">Nets</div>
          </div>
          <div className="h-[415px] shrink-0 bg-[#fbfbfb] mx-px border-b border-[#e2e2e2] relative pt-[4px]">
            <div className="relative h-[386px] ml-[3px] w-[155px] overflow-hidden bg-[#f3f3f3]">
              {layerRows.map((r, i) => (
                <div key={r.n} className={i === 0 ? "h-[18px] flex items-center bg-[#e0e0e0]" : "h-[18px] flex items-center"}>
                  <div className="w-[17px] shrink-0 flex justify-end pr-[1px]">
                    {i === 0 && <div className="w-0 h-0 border-y-[5px] border-y-transparent border-l-[6px] border-l-[#3f3fff] mr-[5px]" />}
                  </div>
                  <div className={`w-[14px] h-[11px] shrink-0 ${r.c}`} />
                  <div className="ml-[6px]"><Eye /></div>
                  <span className="ml-[5px]">{r.n}</span>
                </div>
              ))}
            </div>
            <div className="absolute left-[167px] top-[20px] h-[254px] w-[2px] bg-[#8f8f8f]" />
            <div className="mt-[3px] mx-[7px] h-[17px] bg-white flex items-center text-[#777] pl-[7px] gap-[1px]">
              <div className="w-0 h-0 border-y-[4px] border-y-transparent border-l-[5px] border-l-[#555]" />
              Layer Display Options
            </div>
          </div>
          <div className="px-2 pr-2">
            <div className="mt-[12px] h-[17px] flex items-center">Presets (Ctrl+Tab):</div>
            <div className="mt-[1px]"><Select value="All Layers" /></div>
            <div className="mt-[3px] h-[17px] flex items-center">Viewports (Shift+Tab):</div>
            <div className="mt-[1px]"><Select value="---" /></div>
          </div>
          <div className="mt-[10px] h-[21px] shrink-0 bg-[#bababa] flex items-center pl-[3px]">Selection Filter</div>
          <div className="pt-[5px] pl-[5px]">
            {filters.map(([a, b], i) => (
              <div key={a} className="h-[15px] flex items-center">
                <div className="w-[92px] flex items-center gap-[3px] shrink-0"><CheckBox on />{a}</div>
                <div className="flex items-center gap-[3px] whitespace-nowrap"><CheckBox on={i !== 0} />{b}</div>
              </div>
            ))}
          </div>
        </div>
      </div>

      <div className="h-[31px] shrink-0 border-b border-[#d4d4d4] flex pl-[11px] pt-[2px] text-[12px] leading-[15px] text-[#8a8a8a]">
        <div className="w-[54px]"><div>Pads</div><div>44</div></div>
        <div className="w-[50px]"><div>Vias</div><div>0</div></div>
        <div className="w-[113px]"><div>Track Segments</div><div>27</div></div>
        <div className="w-[52px]"><div>Nets</div><div>36</div></div>
        <div><div>Unrouted</div><div>1</div></div>
      </div>
      <div className="h-[23px] shrink-0 flex items-center text-[12px] text-black whitespace-pre">
        <div className="w-[529px] pl-[2px] pt-[2px] shrink-0 overflow-hidden">File 'C:\Users\SYS-26\Downloads\kicad-lib-master\kicad-lib-master\nodemcu.pretty\kicad proje...</div>
        <div className="w-[78px] h-full flex items-center pl-[5px] pt-[2px] border-l border-[#d8d8d8] shrink-0">Z 4.29</div>
        <div className="w-[160px] h-full flex items-center pl-[5px] pt-[2px] border-l border-[#d8d8d8] shrink-0">X 185.5000  Y 135.2500</div>
        <div className="w-[251px] h-full flex items-center pl-[5px] pt-[2px] border-l border-[#d8d8d8] shrink-0">dx 185.5000  dy 135.2500  dist 229.5709</div>
        <div className="w-[184px] h-full flex items-center pl-[5px] pt-[2px] border-l border-[#d8d8d8] shrink-0">grid 0.2500</div>
        <div className="w-[66px] h-full flex items-center pl-[5px] pt-[2px] border-l border-[#d8d8d8] shrink-0">mm</div>
        <div className="w-[174px] h-full flex items-center pl-[5px] pt-[2px] border-x border-[#d8d8d8] shrink-0">Select item(s)</div>
      </div>
      <Taskbar />

      <ViewerWindow />
    </div>
  );
}
